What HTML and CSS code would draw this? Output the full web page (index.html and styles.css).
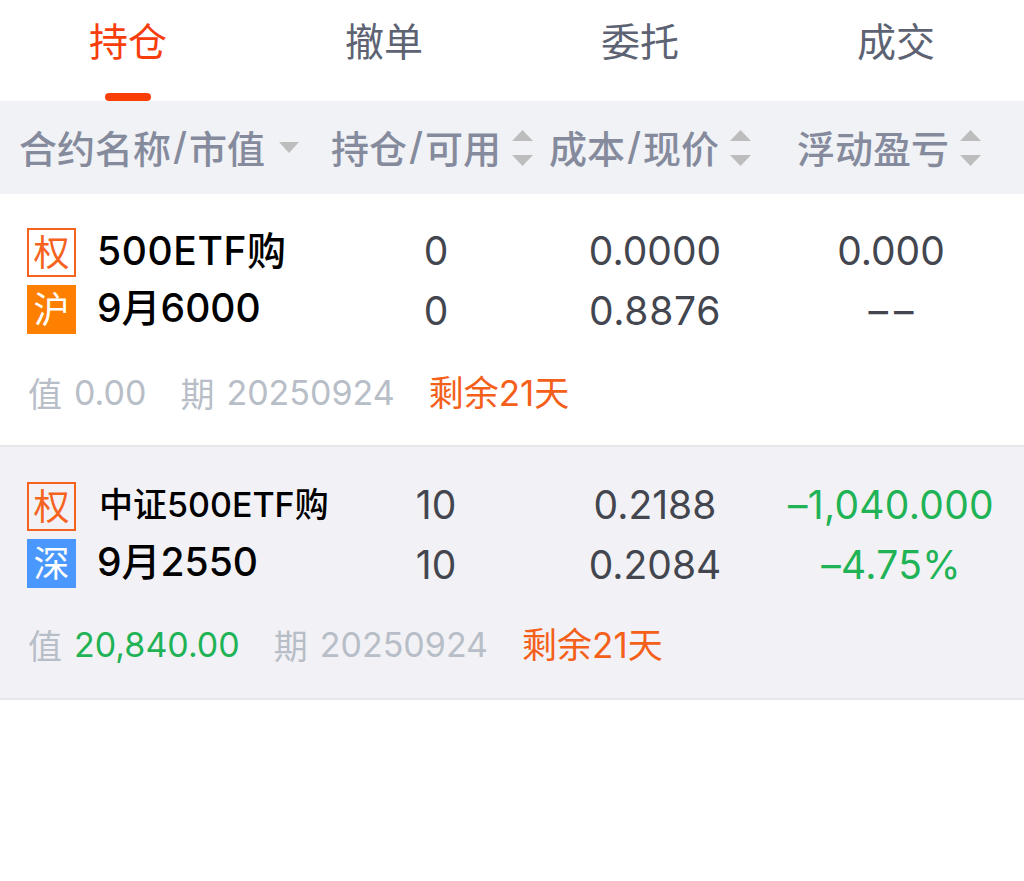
FILE: index.html
```html
<!DOCTYPE html>
<html lang="zh-CN">
<head>
<meta charset="utf-8">
<title>持仓</title>
<link rel="stylesheet" href="styles.css">
</head>
<body>
<nav class="tabs">
  <div class="tab active">持仓<span class="tab-bar"></span></div>
  <div class="tab">撤单</div>
  <div class="tab">委托</div>
  <div class="tab">成交</div>
</nav>
<header class="thead">
  <div class="th">合约名称<span class="slash">/</span>市值<span class="sort first"><svg width="20" height="11" viewBox="0 0 20 11"><path d="M0 0H20L10 11Z"/></svg></span></div>
  <div class="th">持仓<span class="slash">/</span>可用<span class="sort"><svg width="21" height="36" viewBox="0 0 21 36"><path d="M0 11L10.5 0L21 11Z"/><path d="M0 25H21L10.5 36Z"/></svg></span></div>
  <div class="th">成本<span class="slash">/</span>现价<span class="sort"><svg width="21" height="36" viewBox="0 0 21 36"><path d="M0 11L10.5 0L21 11Z"/><path d="M0 25H21L10.5 36Z"/></svg></span></div>
  <div class="th">浮动盈亏<span class="sort"><svg width="21" height="36" viewBox="0 0 21 36"><path d="M0 11L10.5 0L21 11Z"/><path d="M0 25H21L10.5 36Z"/></svg></span></div>
</header>
<section class="row">
  <div class="cells">
    <div class="name">
      <div class="name-line"><span class="badge outline">权</span><span class="title wide">500ETF购</span></div>
      <div class="name-line"><span class="badge sh">沪</span><span class="title">9月6000</span></div>
    </div>
    <div class="col"><span>0</span><span>0</span></div>
    <div class="col"><span>0.0000</span><span class="even">0.8876</span></div>
    <div class="col"><span>0.000</span><span class="dashes">––</span></div>
  </div>
  <div class="meta"><span class="lbl">值</span><span class="val">0.00</span><span class="lbl gap">期</span><span class="val">20250924</span><span class="left">剩余21天</span></div>
</section>
<section class="row alt">
  <div class="cells">
    <div class="name">
      <div class="name-line"><span class="badge outline">权</span><span class="title small">中证500ETF购</span></div>
      <div class="name-line"><span class="badge sz">深</span><span class="title">9月2550</span></div>
    </div>
    <div class="col"><span>10</span><span>10</span></div>
    <div class="col"><span>0.2188</span><span>0.2084</span></div>
    <div class="col green"><span>–1,040.000</span><span>–4.75%</span></div>
  </div>
  <div class="meta"><span class="lbl">值</span><span class="val green">20,840.00</span><span class="lbl gap">期</span><span class="val">20250924</span><span class="left">剩余21天</span></div>
</section>
</body>
</html>
```

FILE: styles.css
```css
* { box-sizing: border-box; }
html, body { margin: 0; padding: 0; background: #fff; }
body {
  width: 1024px;
  height: 881px;
  overflow: hidden;
  font-family: Inter, "Noto Sans CJK SC", sans-serif;
}
.tabs { display: flex; height: 101px; }
.tab {
  position: relative;
  width: 256px;
  padding-top: 15px;
  text-align: center;
  font-size: 39px;
  line-height: 54px;
  color: #5d6373;
}
.tab.active { color: #f83d0c; }
.tab-bar {
  position: absolute;
  left: 105px;
  bottom: 0;
  width: 46px;
  height: 8px;
  border-radius: 4px;
  background: #fa3f06;
}
.thead {
  display: grid;
  grid-template-columns: 312px 218px 248px 1fr;
  align-items: center;
  height: 93px;
  padding: 0 0 3px 19px;
  background: #f0f2f6;
  font-size: 38px;
  font-weight: 500;
  color: #858b9c;
}
.th { display: flex; align-items: center; white-space: nowrap; }
.slash { margin: 0 2px; }
.sort { display: flex; margin: 3px 0 0 11px; }
.sort.first { margin-left: 14px; }
.sort svg { display: block; fill: #bdbdbd; }
.row {
  height: 253px;
  border-bottom: 2px solid #e6e6e8;
  padding-top: 34px;
}
.row.alt { background: #f2f2f6; padding-top: 35px; }
.cells {
  display: grid;
  grid-template-columns: 320px 232px 206px 266px;
  height: 118px;
}
.name { padding-left: 27px; display: flex; flex-direction: column; gap: 8px; }
.name-line { display: flex; align-items: center; height: 49px; }
.badge {
  flex: none;
  width: 49px;
  height: 49px;
  display: flex;
  align-items: center;
  justify-content: center;
  font-size: 36px;
  line-height: 1;
}
.badge.outline { border: 2px solid #f5631e; color: #f5631e; }
.badge.sh { background: #ff8000; color: #fff; }
.badge.sz { background: #4a98fd; color: #fff; }
.title {
  margin: 0 0 9px 21px;
  font-size: 39px;
  font-weight: 500;
  color: #000;
  white-space: nowrap;
}
.title.wide { letter-spacing: 0.6px; }
.title.small { font-size: 34px; margin-left: 23px; }
.col {
  display: flex;
  flex-direction: column;
  align-items: center;
  gap: 15px;
  font-size: 39px;
  line-height: 45px;
  color: #43464f;
}
.col .even { letter-spacing: 0.7px; }
.col .dashes { letter-spacing: 6px; margin-right: -6px; }
.col.green { letter-spacing: 0.3px; }
.col.green, .val.green { color: #1fb356; }
.meta {
  display: flex;
  align-items: center;
  height: 50px;
  margin-top: 21px;
  padding-left: 28px;
  font-size: 34px;
  white-space: nowrap;
}
.alt .meta { margin-top: 19px; }
.lbl { color: #b8bec7; }
.val { color: #b8bec7; margin-left: 12px; }
.gap { margin-left: 34px; }
.left { margin: 0 0 3px 34px; color: #f4601a; font-size: 35px; }
```
